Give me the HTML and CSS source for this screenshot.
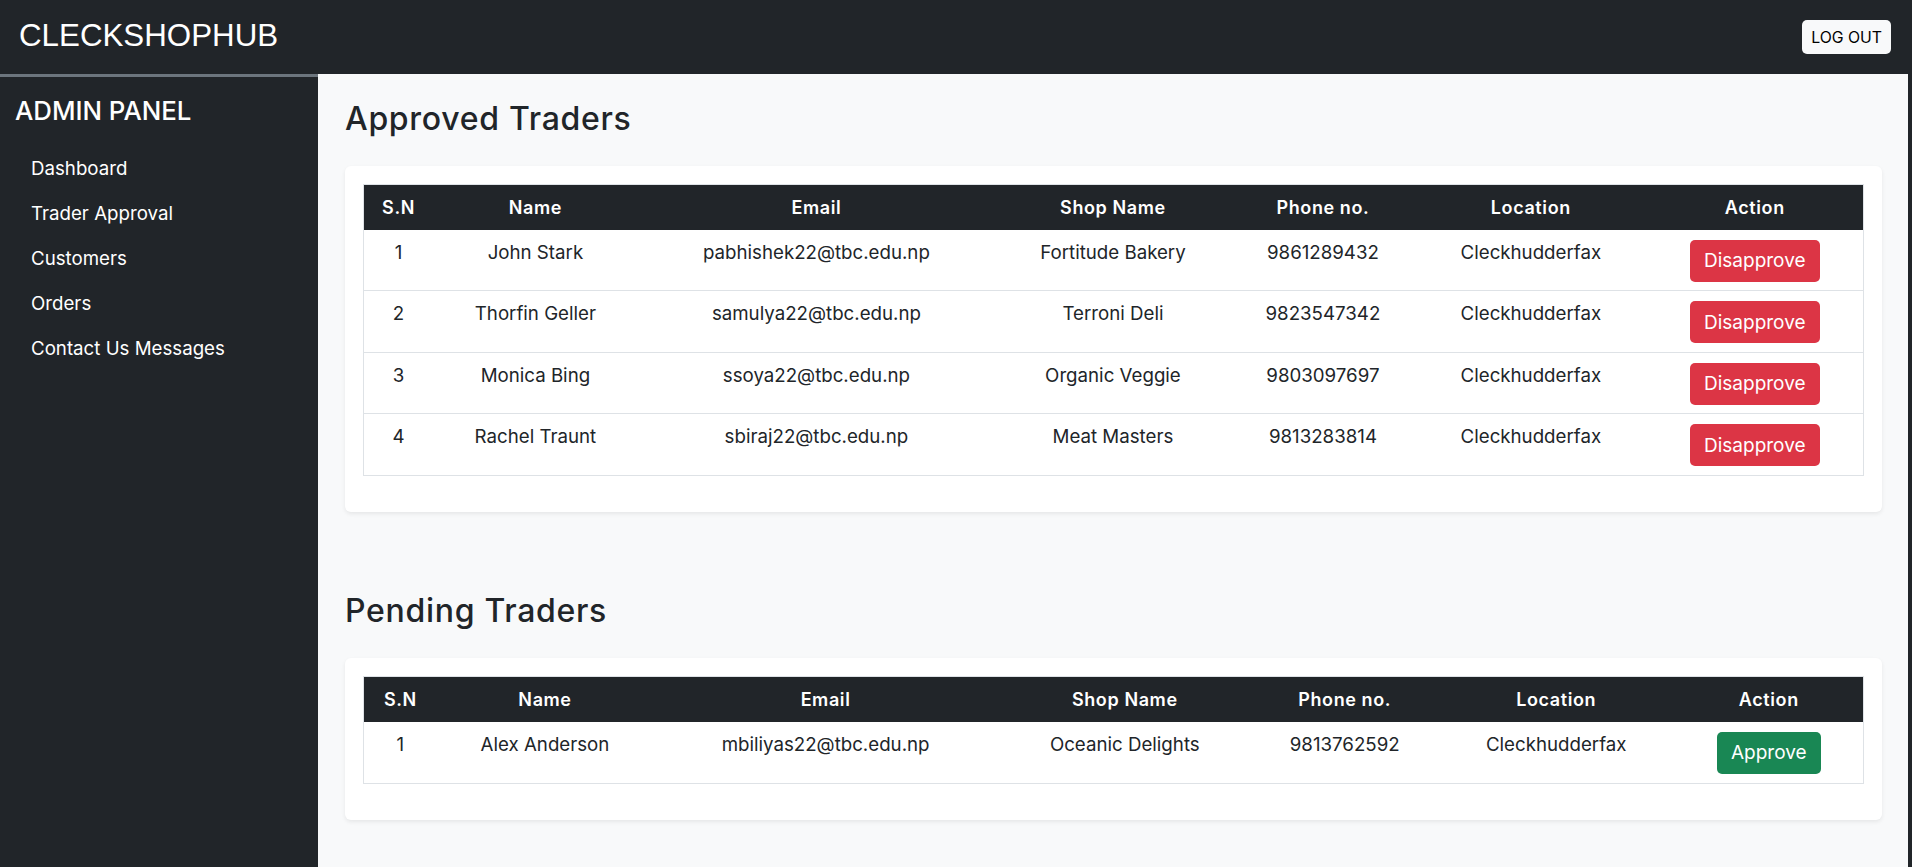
FILE: index.html
```html
<!DOCTYPE html>
<html lang="en">
<head>
<meta charset="utf-8">
<title>CleckShopHub Admin</title>
<link rel="stylesheet" href="styles.css">
</head>
<body>
<header class="topbar">
  <div class="brand">CLECKSHOPHUB</div>
  <button class="logout">LOG OUT</button>
</header>
<div class="layout">
  <aside class="sidebar">
    <h4 class="side-title">ADMIN PANEL</h4>
    <ul class="side-nav">
      <li><a href="#">Dashboard</a></li>
      <li><a href="#">Trader Approval</a></li>
      <li><a href="#">Customers</a></li>
      <li><a href="#">Orders</a></li>
      <li><a href="#">Contact Us Messages</a></li>
    </ul>
  </aside>
  <main class="main">
    <section class="section">
      <h2 class="section-title">Approved Traders</h2>
      <div class="card">
        <table class="tbl tbl-approved">
          <colgroup>
            <col class="c1"><col class="c2"><col class="c3"><col class="c4"><col class="c5"><col class="c6"><col class="c7">
          </colgroup>
          <thead>
            <tr><th>S.N</th><th>Name</th><th>Email</th><th>Shop Name</th><th>Phone no.</th><th>Location</th><th>Action</th></tr>
          </thead>
          <tbody>
            <tr><td>1</td><td>John Stark</td><td>pabhishek22@tbc.edu.np</td><td>Fortitude Bakery</td><td>9861289432</td><td>Cleckhudderfax</td><td><button class="btn btn-danger">Disapprove</button></td></tr>
            <tr><td>2</td><td>Thorfin Geller</td><td>samulya22@tbc.edu.np</td><td>Terroni Deli</td><td>9823547342</td><td>Cleckhudderfax</td><td><button class="btn btn-danger">Disapprove</button></td></tr>
            <tr><td>3</td><td>Monica Bing</td><td>ssoya22@tbc.edu.np</td><td>Organic Veggie</td><td>9803097697</td><td>Cleckhudderfax</td><td><button class="btn btn-danger">Disapprove</button></td></tr>
            <tr><td>4</td><td>Rachel Traunt</td><td>sbiraj22@tbc.edu.np</td><td>Meat Masters</td><td>9813283814</td><td>Cleckhudderfax</td><td><button class="btn btn-danger">Disapprove</button></td></tr>
          </tbody>
        </table>
      </div>
    </section>
    <section class="section section-pending">
      <h2 class="section-title">Pending Traders</h2>
      <div class="card">
        <table class="tbl tbl-pending">
          <colgroup>
            <col class="c1"><col class="c2"><col class="c3"><col class="c4"><col class="c5"><col class="c6"><col class="c7">
          </colgroup>
          <thead>
            <tr><th>S.N</th><th>Name</th><th>Email</th><th>Shop Name</th><th>Phone no.</th><th>Location</th><th>Action</th></tr>
          </thead>
          <tbody>
            <tr><td>1</td><td>Alex Anderson</td><td>mbiliyas22@tbc.edu.np</td><td>Oceanic Delights</td><td>9813762592</td><td>Cleckhudderfax</td><td><button class="btn btn-success">Approve</button></td></tr>
          </tbody>
        </table>
      </div>
    </section>
  </main>
</div>
</body>
</html>
```
FILE: styles.css
```css
* { box-sizing: border-box; }

html, body {
  margin: 0;
  padding: 0;
}

body {
  background: #212529;
  font-family: "Inter", "Open Sans", sans-serif;
  color: #212529;
}

.topbar {
  height: 74px;
  background: #212529;
  display: flex;
  align-items: center;
  justify-content: space-between;
  padding: 0 21px 0 19px;
}

.brand {
  font-family: "Liberation Sans", Arial, sans-serif;
  font-size: 31.3px;
  line-height: 1;
  color: #fff;
  margin-bottom: 2px;
}

.logout {
  height: 34px;
  padding: 0 9px;
  background: #f8f9fa;
  border: 0;
  border-radius: 5px;
  font-family: "Inter", sans-serif;
  font-size: 15.8px;
  color: #000;
}

.layout {
  display: flex;
  min-height: calc(100vh - 74px);
}

.sidebar {
  width: 318px;
  flex: 0 0 318px;
  background: #212529;
  border-top: 3px solid #6c757d;
  padding: 17px 0 0 15px;
}

.side-title {
  margin: 0;
  font-size: 25.8px;
  line-height: 33px;
  font-weight: 500;
  color: #fff;
}

.side-nav {
  list-style: none;
  margin: 18.5px 0 0 0;
  padding: 0 0 0 16px;
}

.side-nav a {
  display: block;
  height: 45px;
  line-height: 45px;
  font-size: 18.7px;
  color: #fff;
  text-decoration: none;
}

.main {
  flex: 1;
  background: #f8f9fa;
  margin-right: 4px;
  padding: 25.5px 26px 20px 27px;
}

.section-title {
  margin: 0 0 28.5px 0;
  font-size: 32px;
  line-height: 38px;
  font-weight: 500;
  letter-spacing: 0.7px;
  color: #212529;
}

.section-pending {
  margin-top: 80px;
}

.card {
  background: #fff;
  border-radius: 6px;
  box-shadow: 0 2px 4px rgba(0, 0, 0, 0.075);
  padding: 18px 18px 36px 18px;
}

.tbl {
  width: 100%;
  border-collapse: collapse;
  table-layout: fixed;
  border: 1px solid #dee2e6;
  text-align: center;
}

.tbl th {
  background: #212529;
  color: #fff;
  height: 45px;
  padding: 0 8px;
  font-size: 18px;
  font-weight: 600;
  letter-spacing: 0.6px;
  vertical-align: middle;
}

.tbl td {
  padding: 10px 8px 8.5px;
  font-size: 18.7px;
  line-height: 26px;
  vertical-align: top;
  color: #212529;
  border-bottom: 1px solid #dee2e6;
}

.tbl-pending td {
  padding-bottom: 9.5px;
}

.btn {
  height: 42px;
  padding: 0 14px;
  border: 0;
  border-radius: 5px;
  font-family: "Inter", sans-serif;
  font-size: 19px;
  color: #fff;
  vertical-align: top;
}

.btn-danger { background: #dc3545; }
.btn-success { background: #198754; }

.tbl-approved .c1 { width: 4.64%; }
.tbl-approved .c2 { width: 13.64%; }
.tbl-approved .c3 { width: 23.83%; }
.tbl-approved .c4 { width: 15.71%; }
.tbl-approved .c5 { width: 12.29%; }
.tbl-approved .c6 { width: 15.43%; }
.tbl-approved .c7 { width: 14.46%; }

.tbl-pending .c1 { width: 4.89%; }
.tbl-pending .c2 { width: 14.42%; }
.tbl-pending .c3 { width: 22.99%; }
.tbl-pending .c4 { width: 16.91%; }
.tbl-pending .c5 { width: 12.41%; }
.tbl-pending .c6 { width: 15.79%; }
.tbl-pending .c7 { width: 12.59%; }
```
